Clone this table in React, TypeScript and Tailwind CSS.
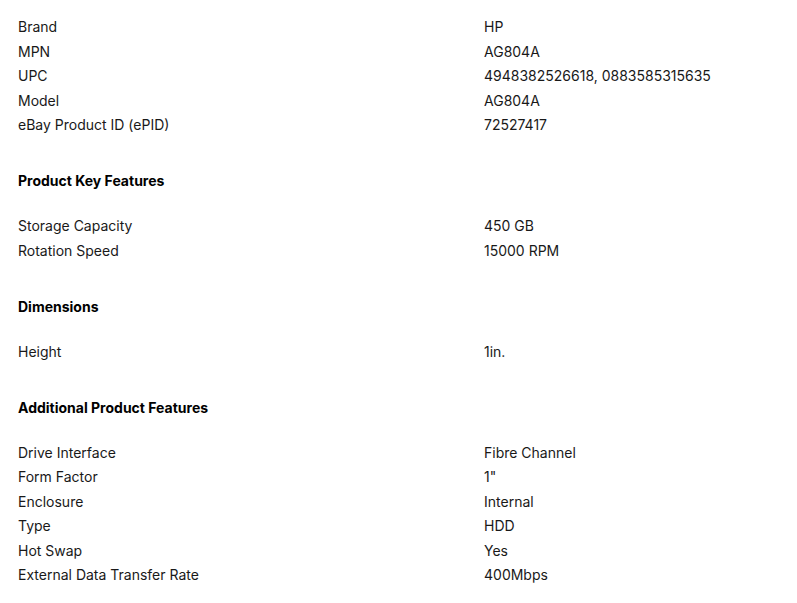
import React from 'react';

type Row = [string, string];

interface Section {
  title?: string;
  rows: Row[];
}

const sections: Section[] = [
  {
    rows: [
      ['Brand', 'HP'],
      ['MPN', 'AG804A'],
      ['UPC', '4948382526618, 0883585315635'],
      ['Model', 'AG804A'],
      ['eBay Product ID (ePID)', '72527417'],
    ],
  },
  {
    title: 'Product Key Features',
    rows: [
      ['Storage Capacity', '450 GB'],
      ['Rotation Speed', '15000 RPM'],
    ],
  },
  {
    title: 'Dimensions',
    rows: [['Height', '1in.']],
  },
  {
    title: 'Additional Product Features',
    rows: [
      ['Drive Interface', 'Fibre Channel'],
      ['Form Factor', '1"'],
      ['Enclosure', 'Internal'],
      ['Type', 'HDD'],
      ['Hot Swap', 'Yes'],
      ['External Data Transfer Rate', '400Mbps'],
    ],
  },
];

const App = () => {
  return (
    <div
      className="min-h-screen bg-white px-[18px] pt-[15px] text-[14px] leading-[24.5px] text-[#191919]"
      style={{ fontFamily: 'Inter, "Liberation Sans", sans-serif' }}
    >
      {sections.map((section, i) => (
        <div key={i}>
          {section.title && (
            <h3 className="mt-[31.5px] mb-[20.5px] font-bold text-black">{section.title}</h3>
          )}
          {section.rows.map(([label, value]) => (
            <div key={label} className="grid grid-cols-[466px_1fr]">
              <span>{label}</span>
              <span>{value}</span>
            </div>
          ))}
        </div>
      ))}
    </div>
  );
};

export default App;
